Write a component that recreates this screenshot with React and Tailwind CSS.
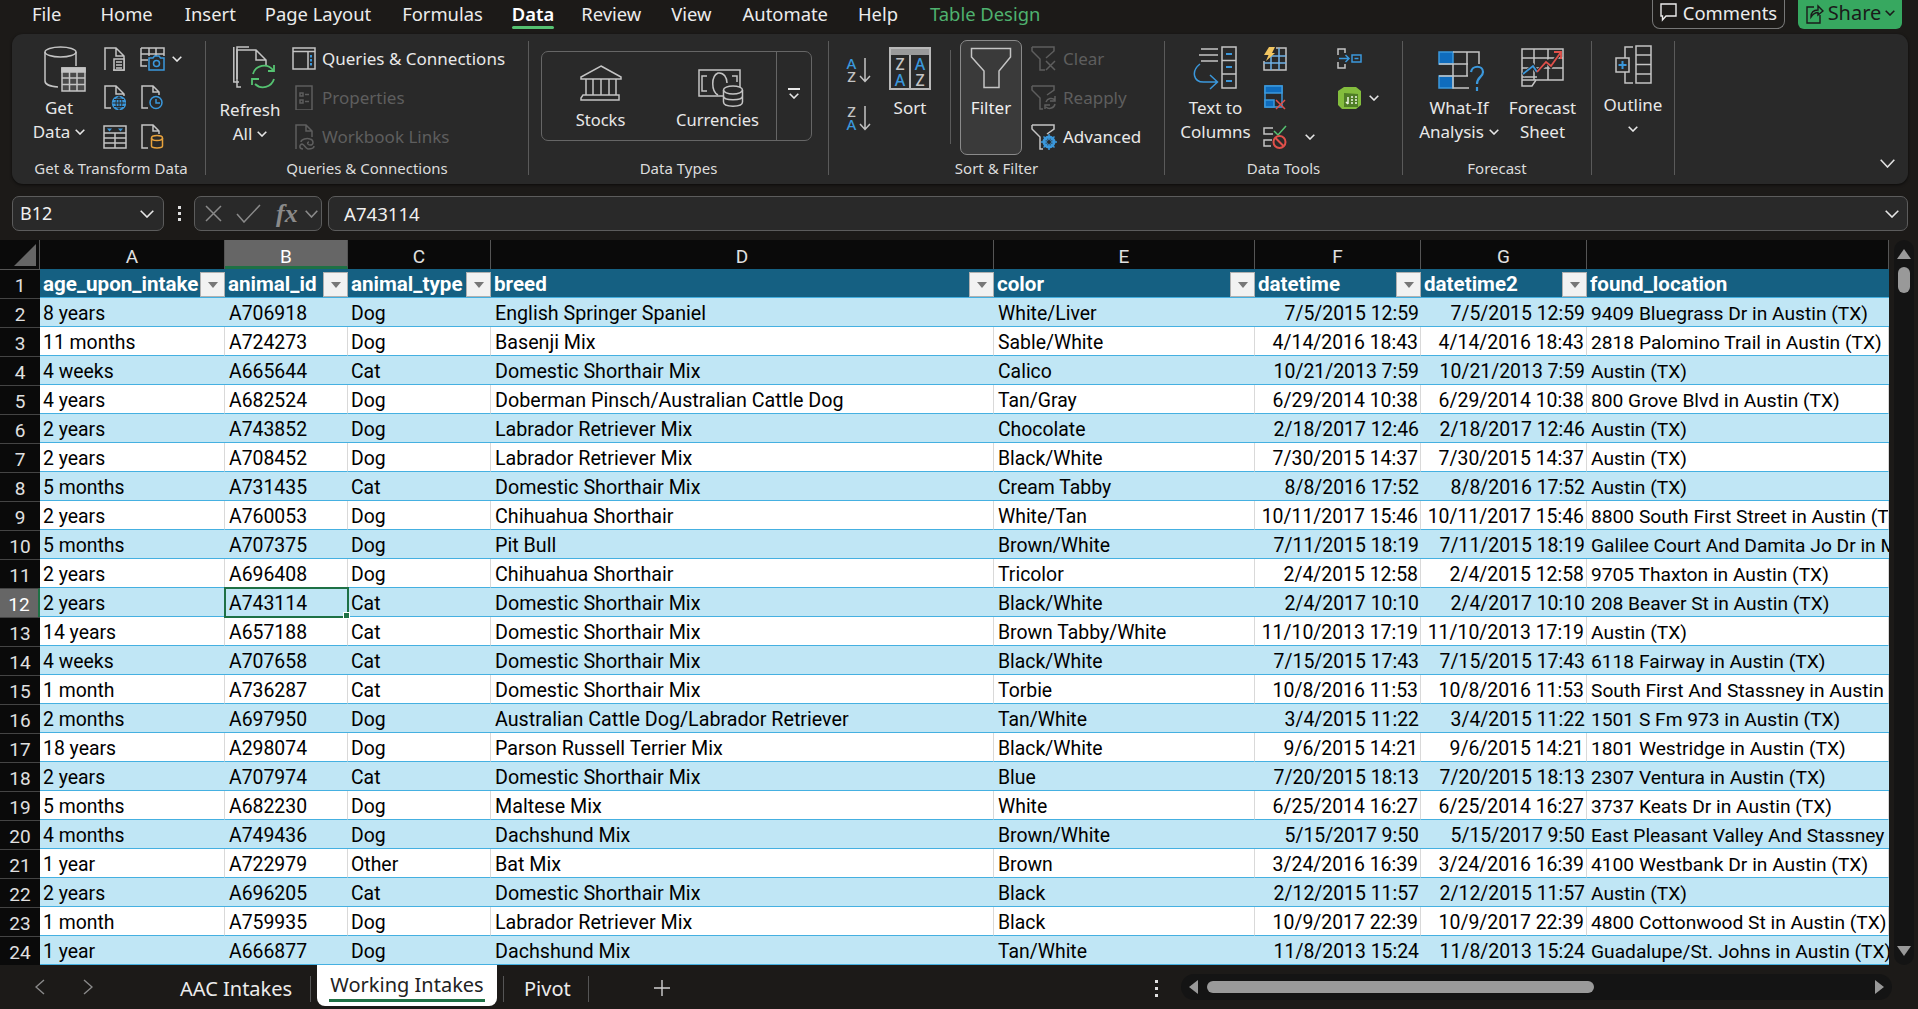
import React from 'react';

const GRAY = '#c4c4c4';
const DIM = '#5e5e5e';
const BLUE = '#3b98dc';

const COL_WIDTHS = ['w-[185px]', 'w-[123px]', 'w-[143px]', 'w-[503px]', 'w-[261px]', 'w-[166px]', 'w-[166px]', 'w-[302px]'];
const COL_LETTERS = ['A', 'B', 'C', 'D', 'E', 'F', 'G', ''];
const HEADERS = ['age_upon_intake', 'animal_id', 'animal_type', 'breed', 'color', 'datetime', 'datetime2', 'found_location'];
const DSM = 'Domestic Shorthair Mix';
const LAB = 'Labrador Retriever Mix';

const ROWS = [
  ['8 years', 'A706918', 'Dog', 'English Springer Spaniel', 'White/Liver', '7/5/2015 12:59', '9409 Bluegrass Dr in Austin (TX)'],
  ['11 months', 'A724273', 'Dog', 'Basenji Mix', 'Sable/White', '4/14/2016 18:43', '2818 Palomino Trail in Austin (TX)'],
  ['4 weeks', 'A665644', 'Cat', DSM, 'Calico', '10/21/2013 7:59', 'Austin (TX)'],
  ['4 years', 'A682524', 'Dog', 'Doberman Pinsch/Australian Cattle Dog', 'Tan/Gray', '6/29/2014 10:38', '800 Grove Blvd in Austin (TX)'],
  ['2 years', 'A743852', 'Dog', LAB, 'Chocolate', '2/18/2017 12:46', 'Austin (TX)'],
  ['2 years', 'A708452', 'Dog', LAB, 'Black/White', '7/30/2015 14:37', 'Austin (TX)'],
  ['5 months', 'A731435', 'Cat', DSM, 'Cream Tabby', '8/8/2016 17:52', 'Austin (TX)'],
  ['2 years', 'A760053', 'Dog', 'Chihuahua Shorthair', 'White/Tan', '10/11/2017 15:46', '8800 South First Street in Austin (TX)'],
  ['5 months', 'A707375', 'Dog', 'Pit Bull', 'Brown/White', '7/11/2015 18:19', 'Galilee Court And Damita Jo Dr in Manor (TX)'],
  ['2 years', 'A696408', 'Dog', 'Chihuahua Shorthair', 'Tricolor', '2/4/2015 12:58', '9705 Thaxton in Austin (TX)'],
  ['2 years', 'A743114', 'Cat', DSM, 'Black/White', '2/4/2017 10:10', '208 Beaver St in Austin (TX)'],
  ['14 years', 'A657188', 'Cat', DSM, 'Brown Tabby/White', '11/10/2013 17:19', 'Austin (TX)'],
  ['4 weeks', 'A707658', 'Cat', DSM, 'Black/White', '7/15/2015 17:43', '6118 Fairway in Austin (TX)'],
  ['1 month', 'A736287', 'Cat', DSM, 'Torbie', '10/8/2016 11:53', 'South First And Stassney in Austin (TX)'],
  ['2 months', 'A697950', 'Dog', 'Australian Cattle Dog/Labrador Retriever', 'Tan/White', '3/4/2015 11:22', '1501 S Fm 973 in Austin (TX)'],
  ['18 years', 'A298074', 'Dog', 'Parson Russell Terrier Mix', 'Black/White', '9/6/2015 14:21', '1801 Westridge in Austin (TX)'],
  ['2 years', 'A707974', 'Cat', DSM, 'Blue', '7/20/2015 18:13', '2307 Ventura in Austin (TX)'],
  ['5 months', 'A682230', 'Dog', 'Maltese Mix', 'White', '6/25/2014 16:27', '3737 Keats Dr in Austin (TX)'],
  ['4 months', 'A749436', 'Dog', 'Dachshund Mix', 'Brown/White', '5/15/2017 9:50', 'East Pleasant Valley And Stassney in Austin (TX)'],
  ['1 year', 'A722979', 'Other', 'Bat Mix', 'Brown', '3/24/2016 16:39', '4100 Westbank Dr in Austin (TX)'],
  ['2 years', 'A696205', 'Cat', DSM, 'Black', '2/12/2015 11:57', 'Austin (TX)'],
  ['1 month', 'A759935', 'Dog', LAB, 'Black', '10/9/2017 22:39', '4800 Cottonwood St in Austin (TX)'],
  ['1 year', 'A666877', 'Dog', 'Dachshund Mix', 'Tan/White', '11/8/2013 15:24', 'Guadalupe/St. Johns in Austin (TX)'],
];

const Chevron = ({ w = 10, h = 6, color = '#e6e6e6', sw = 1.6 }) => (
  <svg width={w} height={h} viewBox={`0 0 ${w} ${h}`} fill="none" stroke={color} strokeWidth={sw}>
    <path d={`M0.7 0.7 L${w / 2} ${h - 1} L${w - 0.7} 0.7`} />
  </svg>
);

const Ic = ({ w, h, className = '', children }) => (
  <svg width={w} height={h} viewBox={`0 0 ${w} ${h}`} fill="none" stroke={GRAY} strokeWidth="1.5" className={`shrink-0 ${className}`}>
    {children}
  </svg>
);

const IconGetData = () => (
  <Ic w={42} h={46} className="ml-[11px]">
    <ellipse cx="16.5" cy="6" rx="15.5" ry="5" />
    <path d="M1 6V35C1 38 6 40.5 14 41 M32 6V20" />
    <rect x="18" y="22" width="23" height="23" fill="#4a4a4a" />
    <rect x="18" y="22" width="23" height="4" fill={GRAY} />
    <path d="M18 32H41M18 38.500H41M25.500 26V45M33 26V45" />
  </Ic>
);

const IconDocLines = () => (
  <Ic w={22} h={24}>
    <path d="M1 23V1H12L20 9V23H9 M12 1V9H20" />
    <rect x="10" y="12" width="10" height="11" fill="#292929" />
    <path d="M12 15H18M12 18H18M12 21H18" />
  </Ic>
);

const IconTableCamera = () => (
  <Ic w={25} h={24}>
    <path d="M1 1H24V9M1 1V19H7M1 7H24M1 13H8M9 1V9M16 1V9" />
    <path d="M9 11H13L14.500 9H19L20.500 11H24V23H9Z" stroke={BLUE} fill="#292929" />
    <circle cx="16.500" cy="16.500" r="3" stroke={BLUE} />
  </Ic>
);

const IconDocGlobe = () => (
  <Ic w={22} h={25}>
    <path d="M7 23H1V1H12L20 9V11 M12 1V9H20" />
    <circle cx="15" cy="18" r="6.500" fill={BLUE} stroke={BLUE} />
    <path d="M8.500 18H21.500M15 11.500V24.500M10 14.500H20M10 21.500H20" stroke="#292929" strokeWidth="1" />
    <ellipse cx="15" cy="18" rx="3" ry="6" stroke="#292929" strokeWidth="1" />
  </Ic>
);

const IconDocClock = () => (
  <Ic w={22} h={25}>
    <path d="M7 23H1V1H12L18 7V10 M12 1V7H18" />
    <circle cx="15" cy="17.500" r="6" stroke={BLUE} />
    <path d="M15 14V18H19" stroke={BLUE} />
  </Ic>
);

const IconFieldTable = () => (
  <Ic w={24} h={24}>
    <rect x="1" y="1" width="22" height="22" />
    <path d="M1 8H23M1 13H23M1 18H23M12 8V23" />
    <path d="M4 3.500H9L6.500 6.500Z M15 3.500H20L17.500 6.500Z" fill={BLUE} stroke="none" />
  </Ic>
);

const IconDocDb = () => (
  <Ic w={23} h={25}>
    <path d="M7 24H1V1H12L18 7V10 M12 1V7H18" />
    <ellipse cx="16" cy="14" rx="5.500" ry="2.500" stroke="#e8a23c" />
    <path d="M10.500 14V22C10.500 24.500 21.500 24.500 21.500 22V14" stroke="#e8a23c" />
  </Ic>
);

const IconRefresh = () => (
  <Ic w={43} h={46} className="ml-[8px]">
    <path d="M4 33V1H16 M0.800 1V36H6" />
    <path d="M8 41H4V4H23L33 14V19 M23 4V14H33" />
    <g stroke="#55c271" strokeWidth="1.800">
      <path d="M20 28A11.500 11.500 0 0 1 40 24 M41 33A11.500 11.500 0 0 1 22 38" />
      <path d="M41 19V25H35 M19 39V33H26" />
    </g>
  </Ic>
);

const IconQueries = () => (
  <Ic w={24} h={23}>
    <rect x="1" y="1" width="22" height="21" />
    <path d="M1 4.500H23M16 4.500V22" />
    <path d="M19 8V10.500M19 12V14.500M19 16V18.500" stroke={BLUE} strokeWidth="2" />
  </Ic>
);

const IconProperties = () => (
  <svg width="24" height="25" viewBox="0 0 24 25" fill="none" stroke={DIM} strokeWidth="1.5">
    <rect x="4" y="1" width="16" height="24" />
    <path d="M8 8H11V11H8ZM8 15H11V18H8ZM13 9.500H17M13 16.500H17" />
  </svg>
);

const IconWorkbookLinks = () => (
  <svg width="24" height="26" viewBox="0 0 24 26" fill="none" stroke={DIM} strokeWidth="1.5">
    <path d="M4 25V1H14L20 7V13 M14 1V7H20" />
    <path d="M9 18C9 15 15 14 18 15C22 16 22 21 18 21C15 21 15 18 17 18 M11 25C7 25 7 21 10 20C13 21 13 24 16 25C19 25 22 24 22 22" />
  </svg>
);

const IconStocks = () => (
  <Ic w={42} h={36}>
    <path d="M21 1L41 12V14H1V12Z" />
    <path d="M6 14V30M13 14V30M21 14V30M29 14V30M36 14V30" />
    <path d="M3 30H39V35H1V33Z" />
  </Ic>
);

const IconCurrencies = () => (
  <Ic w={46} h={38}>
    <path d="M25 27H1V1H42V21" />
    <path d="M9 7H4V22H9 M34 7H39V13" />
    <path d="M20 26C13 22 13 7 20 4C26 3 29 9 29 14" />
    <ellipse cx="35" cy="21" rx="9.500" ry="4" fill="#292929" />
    <path d="M25.500 21V33C25.500 38.500 44.500 38.500 44.500 33V21M25.500 27C25.500 32 44.500 32 44.500 27" />
  </Ic>
);

const SortAZ = ({ flip }) => (
  <div className="flex items-center h-[26px] w-[27px] font-['Noto_Sans',sans-serif]">
    <div className="flex flex-col text-[15px] leading-[13px] font-medium w-[13px] text-center">
      <span className={flip ? 'text-[#c4c4c4]' : 'text-[#3b98dc]'}>{flip ? 'Z' : 'A'}</span>
      <span className={flip ? 'text-[#3b98dc]' : 'text-[#c4c4c4]'}>{flip ? 'A' : 'Z'}</span>
    </div>
    <svg width="12" height="26" viewBox="0 0 12 26" fill="none" stroke={GRAY} strokeWidth="1.500" className="ml-[1px]">
      <path d="M6 1V24M1 19L6 24.500L11 19" />
    </svg>
  </div>
);

const IconSort = () => (
  <div className="w-[42px] h-[43px] border-2 border-[#b8b8b8] flex flex-col font-['Noto_Sans',sans-serif]">
    <div className="h-[6px] bg-[#9a9a9a]" />
    <div className="flex-1 flex text-[16px] leading-[16px] font-medium text-center">
      <div className="flex-1 border-r-2 border-[#b8b8b8] flex flex-col justify-center">
        <span className="text-[#c4c4c4]">Z</span>
        <span className="text-[#3b98dc]">A</span>
      </div>
      <div className="flex-1 flex flex-col justify-center">
        <span className="text-[#3b98dc]">A</span>
        <span className="text-[#c4c4c4]">Z</span>
      </div>
    </div>
  </div>
);

const IconFilter = () => (
  <Ic w={42} h={42}>
    <path d="M1.500 1.500H40.500V10L29 24V40.500H14V24L1.500 10Z" />
  </Ic>
);

const IconClear = () => (
  <svg width="26" height="25" viewBox="0 0 26 25" fill="none" stroke={DIM} strokeWidth="1.500">
    <path d="M1 1H23V5L15 12M1 1V5L9 13V24H14" />
    <path d="M15 15L24 24M24 15L15 24" />
  </svg>
);

const IconReapply = () => (
  <svg width="26" height="25" viewBox="0 0 26 25" fill="none" stroke={DIM} strokeWidth="1.500">
    <path d="M1 1H23V5L16 10M1 1V5L9 13V24H12" />
    <path d="M15 17A5.500 5.500 0 0 1 24 15M24 19A5.500 5.500 0 0 1 15 22M24 11V16H19M14 24V20H19" />
  </svg>
);

const IconAdvanced = () => (
  <Ic w={26} h={26}>
    <path d="M1 1H23V5L16 10M1 1V5L9 13V25H12" />
    <circle cx="18" cy="18" r="5" stroke={BLUE} strokeWidth="3" />
    <path d="M18 10V26M10 18H26M12.500 12.500L23.500 23.500M23.500 12.500L12.500 23.500" stroke={BLUE} strokeWidth="1.500" />
    <circle cx="18" cy="18" r="2" fill="#292929" stroke="none" />
  </Ic>
);

const IconTextToCols = () => (
  <Ic w={46} h={44}>
    <path d="M8 3H25M6 9H25M8 15H25" />
    <rect x="29" y="1" width="14" height="41" />
    <path d="M29 14.500H43M29 28H43" />
    <path d="M33 8H39M33 21H39M33 35H39" stroke={BLUE} strokeWidth="2" />
    <path d="M7 19C-2 26 0 38 12 37H24 M17 30L24.500 37L17 44" stroke={BLUE} transform="translate(0 -1)" />
  </Ic>
);

const IconFlash = () => (
  <Ic w={24} h={24}>
    <path d="M1 14V23H23V1H13" stroke="#c4c4c4" />
    <path d="M8 9H23M1 16H23M8 9V23M16 1V23" stroke="#6fb1e6" />
    <path d="M6 0H12L9 6H12L3 14L5.500 8H1Z" fill="#f2c661" stroke="none" />
  </Ic>
);

const IconDuplicates = () => (
  <Ic w={22} h={25}>
    <rect x="1" y="1" width="17" height="21" stroke={BLUE} />
    <rect x="1" y="1" width="17" height="7" fill="#0f6cbd" stroke={BLUE} />
    <rect x="1" y="15" width="9" height="7" fill="#0f6cbd" stroke={BLUE} />
    <path d="M12 15L21 24M21 15L12 24" stroke="#e0504a" />
  </Ic>
);

const IconValidate = () => (
  <Ic w={25} h={24}>
    <path d="M10 3H1V9H10M9 15H1V21H8" />
    <path d="M11 6L15 10L23 1" stroke="#55c271" />
    <circle cx="16.500" cy="17" r="6" stroke="#e0504a" strokeWidth="2" />
    <path d="M12.500 13L20.500 21" stroke="#e0504a" strokeWidth="2" />
  </Ic>
);

const IconConsolidate = () => (
  <Ic w={25} h={21}>
    <path d="M1 7V1H8V5M1 14V20H8V16" />
    <path d="M2 10.500H12M8.500 7L12 10.500L8.500 14" stroke={BLUE} />
    <rect x="15" y="7" width="9" height="7" stroke={BLUE} />
    <path d="M17.500 10.500H21.500" stroke={BLUE} />
  </Ic>
);

const IconDataModel = () => (
  <svg width="25" height="24" viewBox="0 0 25 24" fill="none">
    <path d="M1 5L7 1H19L24 5V19L19 23H5L1 19Z" fill="#83bd3d" />
    <path d="M7 7L21 8V21H7Z" fill="#4f7d26" />
    <path d="M11 11V18M11 18L9 16M14 11H16M18 11H20M14 14H16M18 14H20M14 17H16M18 17H20" stroke="#eef6e2" strokeWidth="1.500" />
  </svg>
);

const IconWhatIf = () => (
  <Ic w={47} h={43}>
    <rect x="1" y="1" width="14" height="12" fill="#0f6cbd" stroke={BLUE} />
    <rect x="1" y="25" width="14" height="12" fill="#0f6cbd" stroke={BLUE} />
    <path d="M15 1H41V13M1 13H30M1 25H30M29 1V25M15 13V37H31M15 25V37" />
    <path d="M33 21C34 14 45 14 45 21C45 26 39 26 39 33M39 36V40" stroke={BLUE} strokeWidth="2.200" fill="none" />
  </Ic>
);

const IconForecast = () => (
  <Ic w={43} h={39}>
    <path d="M1 1H42V32H15L11 38H1Z" />
    <path d="M1 10H42M1 20H42M1 29H16M13 1V32M27 1V32M1 32H15" />
    <path d="M2 27L12 18L16 24L27 14L30 18L38 6" stroke="#292929" strokeWidth="4" />
    <path d="M2 26L12 18L16 24" stroke={BLUE} strokeWidth="1.800" />
    <path d="M16 24L25 14L30 18L40 4M33 4H40V11" stroke="#e0504a" strokeWidth="1.800" />
  </Ic>
);

const IconOutline = () => (
  <Ic w={37} h={40}>
    <path d="M10 13V2H18M10 27V38H18" />
    <rect x="21" y="1" width="15" height="37" />
    <path d="M21 10H36M21 19.500H36M21 29H36" />
    <rect x="1" y="13" width="13" height="14" fill="#292929" />
    <path d="M3.500 20H11.500M7.500 16V24" stroke={BLUE} strokeWidth="2" />
  </Ic>
);

const BigButton = ({ width, icon, lines, chevron, iconBox = 'h-[50px]' }) => (
  <div className={`${width} shrink-0 flex flex-col pt-[12px] text-[17px] leading-[24px] text-[#e8e8e8]`}>
    <div className={`${iconBox} flex justify-center items-start`}>{icon}</div>
    {lines.map((line, i) => (
      <div key={line} className="text-center whitespace-nowrap flex justify-center items-center gap-[5px]">
        {line}
        {chevron && i === lines.length - 1 && <Chevron />}
      </div>
    ))}
  </div>
);

const IconStack = ({ width, items, className = '' }) => (
  <div className={`${width} ${className} shrink-0 flex flex-col pt-[5px]`}>
    {items.map((item, i) => (
      <div key={i} className="h-[39px] flex items-center justify-center">{item}</div>
    ))}
  </div>
);

const ListRow = ({ icon, text, dim, gap = 'gap-[6px]' }) => (
  <div className={`h-[39px] flex items-center ${gap} whitespace-nowrap text-[17px] ${dim ? 'text-[#5e5e5e]' : 'text-[#e8e8e8]'}`}>
    {icon}
    {text}
  </div>
);

const Separator = () => <div className="w-px h-[134px] mt-[7px] bg-[#5a5a5a] shrink-0" />;

const Group = ({ width, label, children, className = '', labelClass = '' }) => (
  <div className={`${width} shrink-0 h-[150px] flex flex-col`}>
    <div className={`h-[126px] flex ${className}`}>{children}</div>
    <div className={`h-[24px] leading-[17px] text-center text-[15px] text-[#dcdcdc] whitespace-nowrap ${labelClass}`}>{label}</div>
  </div>
);

const Ribbon = () => (
  <div className="mx-[12px] w-[1896px] h-[150px] bg-[#292929] rounded-[11px] flex shadow-[0_1px_3px_rgba(0,0,0,0.6)]">
    <Group width="w-[193px]" label="Get & Transform Data" className="pl-[4px]" labelClass="pl-[5px]">
      <BigButton width="w-[86px]" icon={<IconGetData />} lines={['Get', 'Data']} chevron />
      <IconStack width="w-[26px]" items={[<IconDocLines />, <IconDocGlobe />, <IconFieldTable />]} />
      <IconStack width="w-[28px]" className="ml-[10px]" items={[<IconTableCamera />, <IconDocClock />, <IconDocDb />]} />
      <IconStack width="w-[12px]" className="ml-[5px]" items={[<Chevron />]} />
    </Group>
    <Separator />
    <Group width="w-[322px]" label="Queries & Connections" className="pl-[8px]">
      <BigButton width="w-[72px]" iconBox="h-[52px]" icon={<IconRefresh />} lines={['Refresh', 'All']} chevron />
      <div className="ml-[6px] pt-[5px] flex flex-col">
        <ListRow icon={<IconQueries />} text="Queries & Connections" />
        <ListRow icon={<IconProperties />} text="Properties" dim />
        <ListRow icon={<IconWorkbookLinks />} text="Workbook Links" dim />
      </div>
    </Group>
    <Separator />
    <Group width="w-[299px]" label="Data Types" className="pl-[12px] pt-[17px]">
      <div className="w-[271px] h-[90px] border border-[#666] rounded-[7px] flex text-[16.500px] leading-[24px] text-[#e8e8e8]">
        <div className="w-[117px] flex flex-col items-center">
          <div className="h-[56px] pt-[13px]"><IconStocks /></div>
          Stocks
        </div>
        <div className="w-[117px] flex flex-col items-center">
          <div className="h-[56px] pt-[17px] ml-[6px]"><IconCurrencies /></div>
          Currencies
        </div>
        <div className="flex-1 border-l border-[#666] flex flex-col items-center pt-[36px]">
          <div className="w-[12px] h-[2px] bg-[#e8e8e8] mb-[3px]" />
          <Chevron />
        </div>
      </div>
    </Group>
    <Separator />
    <Group width="w-[335px]" label="Sort & Filter" className="pl-[16px]">
      <div className="w-[27px] shrink-0 flex flex-col pt-[23px] gap-[22px]">
        <SortAZ />
        <SortAZ flip />
      </div>
      <div className="ml-[8px] w-[60px] shrink-0 flex flex-col items-center pt-[13px] text-[17px] leading-[24px] text-[#e8e8e8]">
        <div className="h-[49px]"><IconSort /></div>
        Sort
      </div>
      <div className="ml-[10px] w-px h-[94px] mt-[16px] bg-[#5a5a5a]" />
      <div className="ml-[9px] w-[62px] h-[115px] mt-[6px] shrink-0 border border-[#8a8a8a] rounded-[7px] bg-[#3a3a3a] flex flex-col items-center pt-[6px] text-[17px] leading-[24px] text-[#f0f0f0]">
        <div className="h-[49px]"><IconFilter /></div>
        Filter
      </div>
      <div className="ml-[9px] pt-[5px] flex flex-col">
        <ListRow icon={<IconClear />} text="Clear" dim gap="gap-[6px]" />
        <ListRow icon={<IconReapply />} text="Reapply" dim gap="gap-[6px]" />
        <ListRow icon={<IconAdvanced />} text="Advanced" gap="gap-[6px]" />
      </div>
    </Group>
    <Separator />
    <Group width="w-[237px]" label="Data Tools" className="pl-[10px]">
      <BigButton width="w-[81px]" icon={<IconTextToCols />} lines={['Text to', 'Columns']} />
      <IconStack width="w-[30px]" className="ml-[4px]" items={[<IconFlash />, <IconDuplicates />, <IconValidate />]} />
      <IconStack width="w-[12px]" className="ml-[14px]" items={['', '', <Chevron />]} />
      <IconStack width="w-[30px]" className="ml-[18px]" items={[<IconConsolidate />, <IconDataModel />]} />
      <IconStack width="w-[12px]" className="ml-[4px]" items={['', <Chevron />]} />
    </Group>
    <Separator />
    <Group width="w-[188px]" label="Forecast" className="pl-[13px]">
      <BigButton width="w-[86px]" icon={<div className="pt-[5px] ml-[4px]"><IconWhatIf /></div>} lines={['What-If', 'Analysis']} chevron />
      <BigButton width="w-[81px]" icon={<div className="pt-[2px]"><IconForecast /></div>} lines={['Forecast', 'Sheet']} />
    </Group>
    <Separator />
    <div className="w-[82px] shrink-0 flex flex-col items-center pt-[11px] text-[17px] leading-[24px] text-[#e8e8e8]">
      <div className="h-[48px]"><IconOutline /></div>
      Outline
      <div className="h-[24px] flex items-center"><Chevron /></div>
    </div>
    <Separator />
    <div className="flex-1 flex justify-end items-end pb-[16px] pr-[13px]">
      <Chevron w={15} h={9} color="#e0e0e0" />
    </div>
  </div>
);

const TAB_ITEMS = [
  { name: 'File', cls: 'ml-[32px]' },
  { name: 'Home', cls: 'ml-[39px]' },
  { name: 'Insert', cls: 'ml-[32px]' },
  { name: 'Page Layout', cls: 'ml-[29px]' },
  { name: 'Formulas', cls: 'ml-[31px]' },
  { name: 'Data', cls: 'ml-[29px] font-semibold text-white', active: true },
  { name: 'Review', cls: 'ml-[27px]' },
  { name: 'View', cls: 'ml-[30px]' },
  { name: 'Automate', cls: 'ml-[31px]' },
  { name: 'Help', cls: 'ml-[30px]' },
  { name: 'Table Design', cls: 'ml-[32px] text-[#4fb26f]' },
];

const TopBar = () => (
  <div className="h-[34px] flex justify-between shrink-0">
    <div className="flex text-[18.400px] text-[#ececec] leading-[27px]">
      {TAB_ITEMS.map((t) => (
        <div key={t.name} className={`${t.cls} relative h-[30px] whitespace-nowrap`}>
          {t.name}
          {t.active && <div className="absolute left-0 right-0 top-[26px] h-[3px] rounded-sm bg-[#55c271]" />}
        </div>
      ))}
    </div>
    <div className="flex items-start pr-[16px] gap-[13px] leading-[26px]">
      <div className="w-[133px] h-[29px] pb-[3px] text-[18.400px] border border-t-0 border-[#777] rounded-b-[8px] flex items-center justify-center gap-[6px] text-[#ececec]">
        <svg width="17" height="19" viewBox="0 0 17 19" fill="none" stroke="#ececec" strokeWidth="1.400">
          <path d="M1 1H16V13H6L2.500 17V13H1Z" />
        </svg>
        Comments
      </div>
      <div className="w-[104px] h-[29px] pb-[3px] text-[20px] bg-[#37a860] rounded-b-[6px] flex items-center justify-center gap-[4px] text-[#1a1a1a]">
        <svg width="19" height="21" viewBox="0 0 19 21" fill="none" stroke="#1a1a1a" strokeWidth="1.400">
          <path d="M9 4H2V20H15V12 M6 14C6 9 9 7 13 7V3L18 8L13 12V9.500C10 9.500 8 11 6 14Z" />
        </svg>
        Share
        <Chevron color="#1a1a1a" />
      </div>
    </div>
  </div>
);

const FormulaBar = () => (
  <div className="h-[35px] mt-[12px] shrink-0 flex items-stretch pl-[12px] text-[#f0f0f0] text-[18px]">
    <div className="w-[152px] border border-[#5c5c5c] rounded-[7px] bg-[#292929] flex items-center justify-between pl-[7px] pr-[9px]">
      B12
      <Chevron w={14} h={8} />
    </div>
    <div className="w-[30px] flex flex-col items-center justify-center gap-[3px]">
      <div className="w-[3px] h-[3px] bg-[#e0e0e0]" />
      <div className="w-[3px] h-[3px] bg-[#e0e0e0]" />
      <div className="w-[3px] h-[3px] bg-[#e0e0e0]" />
    </div>
    <div className="w-[128px] border border-[#5c5c5c] rounded-[7px] bg-[#292929] flex items-center pl-[10px] gap-[14px] text-[#8a8a8a]">
      <svg width="17" height="17" viewBox="0 0 17 17" stroke="#8a8a8a" strokeWidth="1.500" className="shrink-0"><path d="M1 1L16 16M16 1L1 16" /></svg>
      <svg width="25" height="19" viewBox="0 0 25 19" fill="none" stroke="#8a8a8a" strokeWidth="1.500" className="shrink-0"><path d="M1 10L8 18L24 1" /></svg>
      <div className="flex items-center gap-[7px] ml-[1px]">
        <span className="font-['Liberation_Serif',serif] italic font-bold text-[26px] leading-none">fx</span>
        <Chevron w={13} h={8} color="#8a8a8a" />
      </div>
    </div>
    <div className="ml-[6px] w-[1580px] border border-[#5c5c5c] rounded-[7px] bg-[#292929] flex items-center justify-between pl-[15px] pr-[8px] text-[18.600px]">
      A743114
      <Chevron w={14} h={8} />
    </div>
  </div>
);

const FilterButton = () => (
  <div className="absolute right-0 top-[3px] w-[25px] h-[25px] bg-[#f2f2f2] border border-[#b0b0b0] flex items-center justify-center">
    <div className="w-0 h-0 border-x-[5px] border-x-transparent border-t-[6px] border-t-[#777]" />
  </div>
);

const cellFont = "font-['Liberation_Sans_Narrow','Roboto',sans-serif]";

const Grid = () => (
  <div className="flex w-[1918px] mt-[9px] shrink-0">
    <div className="w-[1889px] shrink-0 bg-[#0a0a0a]">
      <div className="flex h-[29px] text-[19px] leading-[34px] text-[#e0e0e0] font-['Roboto',sans-serif]">
        <div className="w-[40px] border-r border-[#555] relative">
          <div className="absolute right-[3px] bottom-[3px] w-0 h-0 border-l-[22px] border-l-transparent border-b-[22px] border-b-[#666]" />
        </div>
        {COL_LETTERS.map((c, i) => (
          <div
            key={i}
            className={`${COL_WIDTHS[i]} text-center border-r border-[#555] ${c === 'B' ? 'bg-[#666] border-b-[3px] border-b-[#1e7145] text-white' : ''}`}
          >
            {c}
          </div>
        ))}
      </div>
      <div className={`flex h-[29px] ${cellFont}`}>
        <div className="w-[40px] text-[#e0e0e0] text-[19px] leading-[31px] text-center border-t border-[#555]">1</div>
        {HEADERS.map((h, i) => (
          <div key={h} className={`${COL_WIDTHS[i]} relative bg-[#156082] border-b border-[#45b0e1] text-white font-bold text-[20.600px] leading-[31px] pl-[3px] overflow-hidden whitespace-nowrap`}>
            {h}
            {i < 7 && <FilterButton />}
          </div>
        ))}
      </div>
      {ROWS.map((row, r) => {
        const rowNum = r + 2;
        const banded = rowNum % 2 === 0;
        const selected = rowNum === 12;
        const cells = [row[0], row[1], row[2], row[3], row[4], row[5], row[5], row[6]];
        return (
          <div key={rowNum} className={`flex h-[29px] ${cellFont} leading-[32px]`}>
            <div className={`w-[40px] text-[19px] text-center border-t border-[#444] ${selected ? 'bg-[#666] text-white border-r-2 border-r-[#1e7145]' : 'text-[#e0e0e0]'}`}>
              {rowNum}
            </div>
            {cells.map((text, i) => (
              <div
                key={i}
                className={`${COL_WIDTHS[i]} relative border-b border-[#45b0e1] text-black overflow-hidden whitespace-nowrap ${i === 3 ? 'text-[19.700px]' : i === 7 ? 'text-[19.200px]' : 'text-[19.400px]'} ${banded ? 'bg-[#c0e6f5]' : 'bg-white border-r border-r-[#d9d9d9]'} ${i === 5 || i === 6 ? 'text-right pr-[2px]' : i === 0 || i === 2 ? 'pl-[3px]' : 'pl-[4px]'}`}
              >
                {text}
              </div>
            ))}
          </div>
        );
      })}
    </div>
    <div className="flex-1 flex justify-center">
      <div className="w-[20px] h-[725px] bg-[#141414] rounded-full flex flex-col items-center justify-between py-[9px] mr-[-1px]">
        <div className="flex flex-col items-center gap-[8px]">
          <div className="w-0 h-0 border-x-[7px] border-x-transparent border-b-[10px] border-b-[#999]" />
          <div className="w-[12px] h-[26px] bg-[#999] rounded-full" />
        </div>
        <div className="w-0 h-0 border-x-[7px] border-x-transparent border-t-[10px] border-t-[#999]" />
      </div>
    </div>
  </div>
);

const SheetTabs = () => (
  <div className="flex-1 flex items-start text-[20px] text-[#ececec] relative">
    <svg width="10" height="16" viewBox="0 0 10 16" fill="none" stroke="#8a8a8a" strokeWidth="1.400" className="ml-[35px] mt-[14px]"><path d="M9 1L1 8L9 15" /></svg>
    <svg width="10" height="16" viewBox="0 0 10 16" fill="none" stroke="#8a8a8a" strokeWidth="1.400" className="ml-[38px] mt-[14px]"><path d="M1 1L9 8L1 15" /></svg>
    <div className="ml-[87px] mt-[11px] w-[131px] leading-[26px] whitespace-nowrap border-r border-[#555] h-[26px]">AAC Intakes</div>
    <div className="ml-[6px] w-[180px] h-[41px] bg-white rounded-b-[8px] flex flex-col items-center text-[#222] pt-[7px] leading-[26px] whitespace-nowrap">
      Working Intakes
      <div className="w-[156px] h-[3px] bg-[#1e7145] mt-[1px] shrink-0" />
    </div>
    <div className="ml-[6px] w-[86px] mt-[11px] h-[26px] leading-[26px] border-x border-[#555] pl-[20px]">Pivot</div>
    <svg width="18" height="18" viewBox="0 0 18 18" stroke="#d0d0d0" strokeWidth="1.400" className="ml-[64px] mt-[14px]"><path d="M9 1V17M1 9H17" /></svg>
    <div className="ml-[484px] mt-[15px] flex flex-col gap-[4px]">
      <div className="w-[3px] h-[3px] bg-[#e0e0e0]" />
      <div className="w-[3px] h-[3px] bg-[#e0e0e0]" />
      <div className="w-[3px] h-[3px] bg-[#e0e0e0]" />
    </div>
    <div className="ml-[23px] mt-[9px] w-[711px] h-[26px] bg-[#141414] rounded-full flex items-center pl-[8px] pr-[8px]">
      <div className="w-0 h-0 border-y-[7px] border-y-transparent border-r-[9px] border-r-[#999]" />
      <div className="ml-[9px] w-[387px] h-[12px] bg-[#9a9a9a] rounded-full" />
      <div className="ml-auto w-0 h-0 border-y-[7px] border-y-transparent border-l-[9px] border-l-[#999]" />
    </div>
  </div>
);

export default function App() {
  return (
    <div className="w-[1918px] h-[1009px] overflow-hidden bg-[#1c1a18] flex flex-col font-['Noto_Sans',sans-serif]">
      <TopBar />
      <Ribbon />
      <FormulaBar />
      <div className="relative">
        <Grid />
        <div className="absolute left-[224px] top-[356px] w-[125px] h-[31px] border-2 border-[#1e7145]">
          <div className="absolute right-[-3px] bottom-[-3px] w-[7px] h-[7px] bg-[#1e7145] border border-white" />
        </div>
      </div>
      <SheetTabs />
    </div>
  );
}
